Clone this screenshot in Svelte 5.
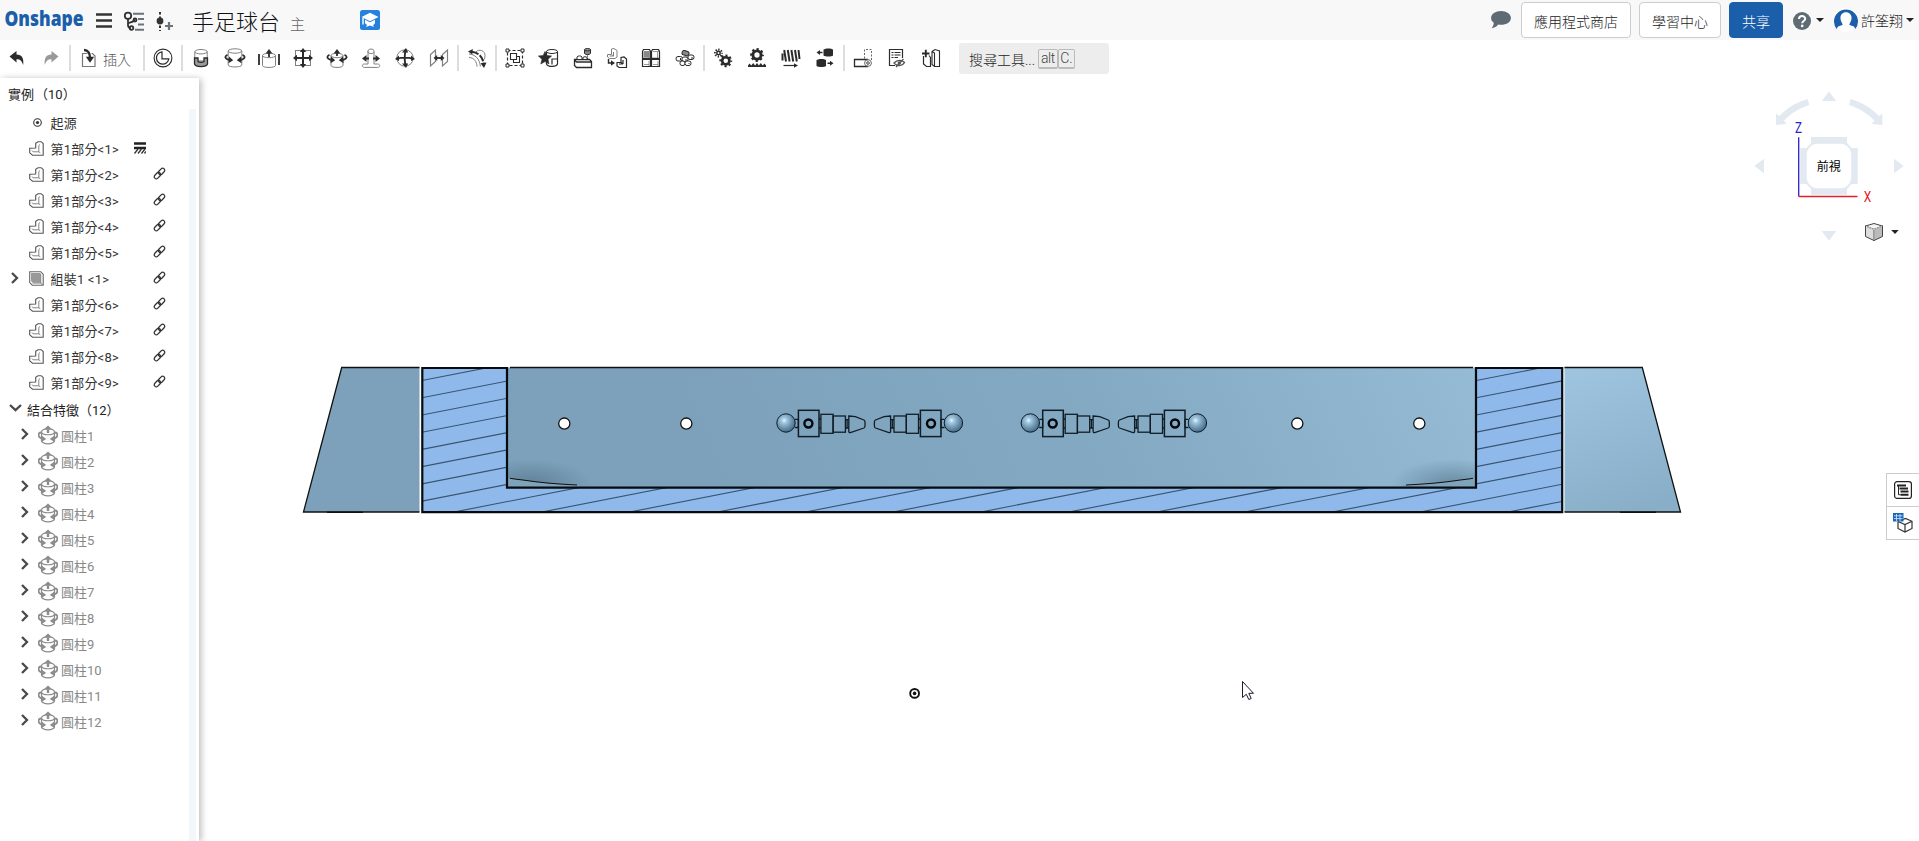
<script>
  const D = '#2b2b2b';
  const G = '#808080';

  function gear(x, y, r, teeth) {
    const step = (Math.PI * 2 * (r + 0.9)) / (teeth * 2);
    return `<circle cx="${x}" cy="${y}" r="${r - 0.8}" fill="none" stroke="${D}" stroke-width="${r * 0.6}"/>
      <circle cx="${x}" cy="${y}" r="${r + 0.9}" fill="none" stroke="${D}" stroke-width="2.2" stroke-dasharray="${step} ${step}" stroke-dashoffset="${step / 2}"/>`;
  }

  const cyl = (w, t, b) =>
    `<path d="M-${w} ${t}V${b}c0 2.6 ${2 * w} 2.6 ${2 * w} 0V${t}" fill="none" stroke="${G}"/><ellipse cx="0" cy="${t}" rx="${w}" ry="2.2" fill="none" stroke="${G}"/>`;
  const turn = `<path d="M-7.5-3.2C-11-1.5-10 1.2-5 2.2M7.5-3.2C11-1.5 10 1.2 5 2.2" fill="none" stroke="${D}" stroke-width="1.8"/>
    <path d="M-6-1.5-1.8 2.2-6.5 5.2zM6-1.5 1.8 2.2 6.5 5.2z" fill="${D}"/>`;

  const icons = {
    undo: `<path d="M-7.5-1.5-.5-7v3.4C5-3.6 7 0 6.2 7 4.6 2.4 3.2 1.2-.5 1.2V4.4z" fill="${D}"/>`,
    redo: `<path d="M7.5-1.5.5-7v3.4C-5-3.6-7 0-6.2 7-4.6 2.4-3.2 1.2.5 1.2V4.4z" fill="#999"/>`,
    insert: `<path d="M-1.5-4.5H-6.5V8.5H6V-2L3.5-4.5H2.5" fill="none" stroke="#777" stroke-width="1.2"/>
      <path d="M-5-8C-1-8 1-5 1 0" fill="none" stroke="${D}" stroke-width="2.4"/><path d="M-3.2-1.2H5.2L1 4.8z" fill="${D}"/>`,
    clock: `<circle r="8.9" fill="none" stroke="${D}" stroke-width="1.1"/><path d="M-1-6.2V0.8H5.8A6.2 6.2 0 1 1-1-6.2z" fill="none" stroke="${D}" stroke-width="1.2"/>`,
    fasten: `${cyl(6.2, -6.3, 1)}<path d="M-6.5 0v6c1 3.4 12 3.4 13 0V0H3v3.5c-1 1-5 1-6 0V0z" fill="#999" stroke="${D}" stroke-width="1.3"/>`,
    revolute: `${cyl(6.8, -7, 7)}${turn}`,
    slider: `${cyl(6.5, -2.5, 7.5)}<path d="M0-1V-6M-10-4V7M10-4V7" stroke="${D}" stroke-width="1.8"/><path d="M-3.4-4.5 0-9 3.4-4.5z" fill="${D}"/>`,
    planar: `<rect x="-7.5" y="-7.5" width="15" height="15" fill="none" stroke="${G}"/><path d="M-7 0H7M0-7V7" stroke="${D}" stroke-width="2"/>
      <path d="M0-10 3.200-6H-3.200zM0 10 3.200 6H-3.200zM-10 0-6-3.200V3.200zM10 0 6-3.200V3.200z" fill="${D}"/>`,
    cylindrical: `${cyl(6, -2.5, 7.5)}${turn}<path d="M0-2V-6" stroke="${D}" stroke-width="1.8"/><path d="M-3.4-4.5 0-9 3.4-4.5z" fill="${D}"/>`,
    pinslot: `<path d="M-3-7V6H-6.5c-3 0-3 3.4 0 3.4H6.5c3 0 3-3.4 0-3.4H3V-7c0-2.6-6-2.6-6 0v1c0 2 6 2 6 0" fill="none" stroke="${G}"/>
      <path d="M-6 .5H-2M2 .5H6" stroke="${D}" stroke-width="1.8"/><path d="M-9 .5-4.5-3V4zM9 .5 4.5-3V4z" fill="${D}"/>`,
    ball: `<circle r="8.2" fill="none" stroke="${G}"/><path d="M-8 1C-4-.8 4-.8 8 1M1-8C-.8-4-.8 4 1 8" fill="none" stroke="${D}" stroke-width="1.9"/>
      <path d="M1-10 3.200-5.500H-3zM1 10 3.200 5.500H-3zM-10 1-6-2.500V3zM10 1 6-2.500V3z" fill="${D}"/>`,
    parallel: `<path d="M-8.5-3.5-3.5-8V3.5L-8.5 8zM3.5-3.5 8.5-8V3.5L3.5 8z" fill="none" stroke="${G}" stroke-width="1.2"/>
      <path d="M-3 0H3" stroke="${D}" stroke-width="1.9"/><path d="M-5.5 0-1.8-3V3zM5.5 0 1.8-3V3z" fill="${D}"/>`,
    tangent: `<path d="M-8-.5C-3-.5 0 4 0 8.5M-8-4C-2.5-4 3 1 3.3 8.5M-1-6C2-9.500 8-7.500 8-2.500 8-.5 7.500 1 6.500 2" fill="none" stroke="${G}"/>
      <path d="M-5-6.200C1-5.500 6.200-1 6.500 5.500" fill="none" stroke="${D}" stroke-width="2" stroke-dasharray="7 1.500"/><path d="M-9-6.500-4.200-9-4.700-3.500zM7 10 3.500 5.300 9.500 4.500z" fill="${D}"/>`,
    group: `<path d="M-7.500-7.500H7.500V7.500H-7.500z" fill="none" stroke="${D}" stroke-width="1.200" stroke-dasharray="3 2"/>
      <path d="M-9-9h3v3h-3zM6-9h3v3H6zM-9 6h3v3h-3zM6 6h3v3H6z" fill="#fff" stroke="${D}"/><path d="M-1.500-1.500H4.500V4.500H-1.500z" fill="none" stroke="${D}" stroke-width="1.100"/><path d="M-4.500-4.500H1.500V1.500H-4.500z" fill="#fff" stroke="${D}" stroke-width="1.100"/>`,
    star: `<path d="M-2.500-6.500V6C-1 9.500 7.500 9 8.500 6V-6.500M3 6.500V1H8" fill="none" stroke="${D}" stroke-width="1.200"/><ellipse cx="3" cy="-6.500" rx="5.500" ry="2" fill="#fff" stroke="${D}"/>
      <path d="M-4-6.500-2.200-2.500 2.600-2-1 1.200 0 6-4 3.600-8.200 6-7 1.200-10.600-2-5.800-2.500z" fill="${D}" stroke="${D}" stroke-width=".6"/>`,
    stack: `<path d="M-8.500 1.500H6.500L8.500 3.500V9.500H-6.500L-8.500 7.500zM-8.500 2l2 2h15" fill="none" stroke="${D}" stroke-width="1.300"/><path d="M-6 1v-2c1-1.500 4-1.500 5 0v2M0 1v-1.500c1-1 3-1 4 0V1" fill="#fff" stroke="${D}"/>
      <path d="M1.500-8.500v4c1 1.500 5 1.500 6 0v-4" fill="#888" stroke="${D}"/><ellipse cx="4.500" cy="-8.300" rx="3" ry="1.200" fill="#999" stroke="${D}"/><path d="M4.500-2.500V1.500" stroke="${D}" stroke-dasharray="1.200 1"/>`,
    replicate: `<path d="M-9.500-3.500h4V-9L-3-9.500l3 2V-1l-2 1.500h-5.500l-2-1.500zM-5.500-3.500l2 1.500M-3.500-2h-4M-3.500-2V-6" fill="none" stroke="${G}"/>
      <path d="M0 4.500H4V-.5L7-1l2.500 2V9.500H2L0 8zM4 4.500l2 1.500M6 6H2M6 6V2" fill="none" stroke="${D}" stroke-width="1.200"/><path d="M-8.500 1v4h3" fill="none" stroke="${D}" stroke-width="1.400"/><path d="M-6 2.200-2 5-6 7.800z" fill="${D}"/>`,
    pattern: `<path d="M-8.500-6.500v6.800h8v-6.800l-1-2h-6zM.5-6.500V.3h8v-6.800l-1-2h-6zM-8.500 1.500v7h8v-7zM.5 1.500v7h8v-7z" fill="#fff" stroke="${D}" stroke-width="1.200"/><path d="M-7.500-6.500h6.200V-.5h-6.200z" fill="#888"/><path d="M-7-6.500h6M2-6.500h6M-7 6.500h5M2 6.500h5M-2-6V0M6.500-6V0M-2 3V8M7 3V8" stroke="${G}" stroke-width=".8"/>`,
    circular: `<g stroke="${D}" stroke-width="1"><rect x="-4.500" y="-7" width="7" height="4.500" rx="2" transform="rotate(18)" fill="#888"/><g fill="#fff"><rect x="-9" y="-1.500" width="6.500" height="4.500" rx="2"/><rect x="-3" y="-1" width="6" height="4.500" rx="2"/><rect x="3" y="-3" width="6" height="4.500" rx="2"/><rect x="-5" y="3" width="5" height="4.500" rx="2"/><rect x="0" y="3" width="6" height="4.500" rx="2"/></g><path d="M-4.500 0V2M1 1V3M7-1V1M4 5v1"/></g>`,
    gears: gear(-4.5, -5, 2.5, 8) + gear(2.8, 2.8, 4.4, 8),
    rack: gear(0, -3, 4.9, 8) + `<path d="M-9 9V7.500L-7.500 5.500-5.700 7.500-3.800 5-1.900 7.500 0 5 1.900 7.500 3.800 5 5.700 7.500 7.500 5.500 9 7.500V9z" fill="${D}"/>`,
    screw: `<path d="M-8.500-4.500v7M-6.800-8l1.800 11.500M-3.200-8l1.800 11.500M.4-8l1.800 11.500M4-8l1.800 11.500M7.500-8l1 9" stroke="${D}" stroke-width="2" fill="none"/><path d="M-7.500 7.500H4" stroke="${D}" stroke-width="1.200"/><path d="M3 5.200 7 7.500 3 9.800z" fill="${D}"/>`,
    linear: `<path d="M-1.500-8.500c2-1.500 8-1.500 9.500 0v6c-1.500 1.300-7.500 1.300-9.500 0zM-8.500 2c2-1.500 8-1.500 9.500 0v6c-1.500 1.300-7.500 1.300-9.500 0z" fill="${D}"/><path d="M-2.500-5.500H-6M2.500 5.200H6" stroke="${D}" stroke-width="1.400"/><path d="M-8.500-5.500-5-8V-3zM8.500 5.200 5 2.700V7.700z" fill="${D}"/>`,
    section: `<path d="M1.500.5V-8.500H8.500V2" fill="none" stroke="#666" stroke-dasharray="2 1.500"/><path d="M5 1.500H-8.500v7H5" fill="none" stroke="${D}" stroke-width="1.300"/><circle cx="5" cy="5" r="3.400" fill="none" stroke="#666"/><circle cx="5" cy="5" r="1.300" fill="none" stroke="#444"/>`,
    bom: `<path d="M-2 7.500H-7.500V-8.500H5.500V0" fill="none" stroke="${D}" stroke-width="1.200"/><path d="M-5.500-5.500h2M-2.500-5.500H3.500M-5.500-3h2M-2.500-3H3.500M-5.500-.5h2M-2.500-.5H1" stroke="${D}" stroke-width="1.200"/><path d="M-3 5C0 1.500 5 1.500 7.500 4.500 5 8.500 0 8.500-3 5zM-1 9 6.500 1" fill="none" stroke="#555" stroke-width="1.300"/><circle cx="2.300" cy="5" r="1.700" fill="#555"/>`,
    config: `<path d="M-7.500-2V6l3 2.500H-.5V-1M-2-2.500l1.500 2" fill="none" stroke="${D}" stroke-width="1.200"/><path d="M1-6.500 4-8.500 8.500-7V8.500H3.500L1 6.500zM1-6.500 3.500-5V8" fill="none" stroke="${D}" stroke-width="1.100"/><path d="M-9-4.500H-1.500M-5.200-8.300V-.8" stroke="${D}" stroke-width="1.900"/>`
  };

  const toolbar = [
    ['undo', 'redo'],
    ['insert'],
    ['clock'],
    ['fasten', 'revolute', 'slider', 'planar', 'cylindrical', 'pinslot', 'ball', 'parallel'],
    ['tangent'],
    ['group', 'star', 'stack', 'replicate', 'pattern', 'circular'],
    ['gears', 'rack', 'screw', 'linear'],
    ['section', 'bom', 'config']
  ];

  const parts = [1, 2, 3, 4, 5, 0, 6, 7, 8, 9];
  const mates = Array.from({ length: 12 }, (_, i) => i + 1);

  const slope = 0.19605;
  const hatch = Array.from({ length: 23 }, (_, k) => {
    const y = 380.3 + 17.22 * (k - 1);
    return { x1: 403.3, y1: y + 20 * slope, x2: 1583.3, y2: y - 1160 * slope };
  });
  const holes = [564.3, 686.3, 1297.3, 1419.3];
  const players = [
    { x: 808.4, dir: 1 },
    { x: 931, dir: -1 },
    { x: 1052.7, dir: 1 },
    { x: 1175, dir: -1 }
  ];
</script>

<div class="app">
  <header>
    <svg class="logo" width="84" height="40" viewBox="0 0 84 40">
      <text x="4.500" y="25.500" textLength="79" lengthAdjust="spacingAndGlyphs">Onshape</text>
    </svg>
    <svg class="nav" width="90" height="40" viewBox="90 0 90 40">
      <path d="M96 14.500h16M96 20.500h16M96 26.500h16" stroke="#333" stroke-width="2.600" />
      <g fill="none" stroke="#333" stroke-width="1.800">
        <circle cx="128" cy="15.800" r="3.200" /><path d="M128 19v6c0 2 1 3 3 3M128 24c0-2 6-1 6.500-4.500" /><circle cx="131.500" cy="28" r="1.800" /><circle cx="135" cy="20" r="1.500" />
      </g>
      <path d="M133 13.800h11M138 19h6M138 24.500h6M135 29.800h9" stroke="#68737b" stroke-width="2" />
      <path d="M160 12v19" stroke="#333" stroke-width="2" stroke-dasharray="2.500 2" /><circle cx="160" cy="21" r="3.400" fill="#333" />
      <path d="M165 26h8M169 22v8" stroke="#68737b" stroke-width="2.200" />
    </svg>
    <h1>手足球台</h1>
    <span class="tab">主</span>
    <svg class="badge" width="20" height="20" viewBox="0 0 20 20">
      <rect width="20" height="20" rx="2.500" fill="#2581dd" />
      <path d="M1.500 7 10 2.800 18.500 7 10 11.200zM5 9.800l5 2.400 5-2.400v3.500L13 15.500l1 1.500-4-1.500L6 17l1-2-2-1.700z" fill="#fff" /><path d="M3 8v6.500" stroke="#fff" stroke-width="1.400" />
    </svg>
    <div class="account">
      <svg class="chat" width="20" height="18" viewBox="0 0 20 18"><path d="M10 0c5.500 0 9.900 3 9.900 6.900s-4.400 6.900-9.900 6.900c-1 0-2-.1-2.800-.3C5.600 15.500 3.500 16.900.5 17.300 1.800 15.800 2.600 14 2.800 11.700 1.100 10.500.1 8.800.1 6.900.1 3 4.500 0 10 0z" fill="#5f6b74" /></svg>
      <button class="b1">應用程式商店</button>
      <button class="b2">學習中心</button>
      <button class="share">共享</button>
      <svg class="help" width="18" height="18" viewBox="0 0 18 18"><circle cx="9" cy="9" r="9" fill="#5f6b74" /><path d="M6 7c0-4 6.200-3.800 6.200-.3C12.200 9 9.200 8.900 9.200 11.200" fill="none" stroke="#fff" stroke-width="2" /><circle cx="9.200" cy="13.900" r="1.300" fill="#fff" /></svg>
      <i class="caret c1"></i>
      <svg class="avatar" width="24" height="24" viewBox="0 0 24 24"><circle cx="12" cy="12" r="12" fill="#fff" /><path d="M2.700 21A12 12 0 1 1 21.300 21L20 18.500 15.500 17C15 15.500 18 13 17.500 9 17 2.500 7 2.500 6.500 9 6 13 9 15.500 8.500 17L4 18.500z" fill="#1b5faa" /></svg>
      <span class="name">許筌翔</span>
      <i class="caret c2"></i>
    </div>
  </header>

  <nav class="tools">
    {#each toolbar as section, s}
      {#if s > 0}<span class="sep"></span>{/if}
      {#each section as key}
        <span class="tool" class:wide={key === 'insert'}>
          <svg width="22" height="22" viewBox="-11 -11 22 22">{@html icons[key]}</svg>
          {#if key === 'insert'}<em>插入</em>{/if}
        </span>
      {/each}
    {/each}
    <div class="search"><span>搜尋工具...</span><kbd class="alt">alt</kbd><kbd>C.</kbd></div>
  </nav>

  <main>
    <aside>
      <div class="list">
        <div class="title">實例<span>（10）</span></div>
        <div class="row">
          <svg class="origin" width="9" height="9" viewBox="0 0 9 9"><circle cx="4.500" cy="4.500" r="3.800" fill="none" stroke="#333" stroke-width="1.100" /><circle cx="4.500" cy="4.500" r="1.600" fill="#333" /></svg>
          <span class="label">起源</span>
        </div>
        {#each parts as n}
          <div class="row">
            {#if n === 0}
              <svg class="chev" width="8" height="12" viewBox="0 0 8 12"><path d="M1 1l5 5-5 5" /></svg>
              <svg class="part" width="15" height="15" viewBox="0 0 15 15"><path d="M.7.7h11l2.500 2.500v11h-11L.7 11.500z" fill="#fff" stroke="#666" stroke-width="1.100" /><path d="M2 2h9v9.500H3.500L2 10z" fill="#999" /><path d="M11.700 2.500v9.500H3.500M11.700 12l2 2" fill="none" stroke="#777" /></svg>
              <span class="label">組裝1 &lt;1&gt;</span>
            {:else}
              <svg class="part" width="15" height="15" viewBox="0 0 15 15"><path d="M.7 7.200 6.700 7V2.200L9 .7h3.200l2 1.800v11.700H3.500L.7 11.800z" fill="none" stroke="#555" stroke-width="1.100" /><path d="M3 9.500l1 1.300h5.800V4.500L11 3.500M9.800 10.800l1.500 1" fill="none" stroke="#777" stroke-width=".9" /></svg>
              <span class="label">第1部分&lt;{n}&gt;</span>
            {/if}
            {#if n === 1}
              <svg class="fixed" width="12" height="12" viewBox="0 0 12 12"><path d="M0 1.500h12M0 6h12" stroke="#222" stroke-width="2.600" /><path d="M.5 11.500 4 7M4 11.500 7.500 7M7.500 11.500 11 7M10.500 11.500 12 9.500" fill="none" stroke="#333" stroke-width="1.300" /></svg>
            {:else}
              <svg class="link" width="13" height="13" viewBox="0 0 13 13"><g fill="none" stroke="#333" stroke-width="1.300"><rect x="-3.600" y="-2.100" width="7.200" height="4.200" rx="2.100" transform="translate(8.600 4.400) rotate(-45)" /><rect x="-3.600" y="-2.100" width="7.200" height="4.200" rx="2.100" transform="translate(4.400 8.600) rotate(-45)" /></g></svg>
            {/if}
          </div>
        {/each}
        <div class="row heading">
          <svg class="down" width="13" height="8" viewBox="0 0 13 8"><path d="M1 1l5.500 5.200L12 1" /></svg>
          <span>結合特徵（12）</span>
        </div>
        {#each mates as n}
          <div class="row mate">
            <svg class="chev" width="8" height="12" viewBox="0 0 8 12"><path d="M1 1l5 5-5 5" /></svg>
            <svg class="mateicon" width="20" height="20" viewBox="-10 -10 20 20">
              <g fill="none" stroke="#8c8c8c" stroke-width="1.200"><path d="M-6.500-3.500V6C-5 9.700 5 9.700 6.500 6V-3.500M-6.500-3.500C-5-7 5-7 6.500-3.500M-6.500-2.500C-5 .5 5 .5 6.500-2.500" /><path d="M-7-2.500C-10.500-2.500-10.500 3-5 3.500M7-2.500C10.500-2.500 10.500 3 5 3.500" stroke-width="1.800" /></g>
              <path d="M0-9.500 3.800-6H1.200V-2H-1.200V-6H-3.800zM-6 .8-1.800 4-6.500 7zM6 .8 1.800 4 6.500 7z" fill="#8c8c8c" />
            </svg>
            <span>圓柱{n}</span>
          </div>
        {/each}
      </div>
      <div class="track"></div>
    </aside>

    <section class="stage">
      <svg width="1720" height="763" viewBox="199 78 1720 763">
        <defs>
          <linearGradient id="back" gradientUnits="userSpaceOnUse" x1="760" y1="560" x2="1440" y2="260"><stop offset="0" stop-color="#7da1bb" /><stop offset=".5" stop-color="#84aac3" /><stop offset="1" stop-color="#95bbd5" /></linearGradient>
          <linearGradient id="flap" x1=".3" y1="0" x2=".6" y2="1"><stop offset="0" stop-color="#9dc3de" /><stop offset="1" stop-color="#89aec8" /></linearGradient>
          <radialGradient id="sphere" cx=".4" cy=".36" r=".66"><stop offset="0" stop-color="#e8f4fb" /><stop offset=".22" stop-color="#a2c8e0" /><stop offset=".6" stop-color="#6f97b3" /><stop offset="1" stop-color="#436a85" /></radialGradient>
          <radialGradient id="shade"><stop offset="0" stop-color="#48677b" stop-opacity=".55" /><stop offset="1" stop-color="#48677b" stop-opacity="0" /></radialGradient>
          <clipPath id="profile"><path d="M422 368H507V488H1476V368H1562V512H422z" /></clipPath>
          <clipPath id="inside"><path d="M508 368H1475V487H508z" /></clipPath>
        </defs>

        <path d="M341.700 367.500H419.500V512H303.500z" fill="#7da1ba" />
        <path d="M419.500 367.500H341.700L303.500 512H419.500" fill="none" stroke="#111" stroke-width="1.300" />
        <path d="M327 512.300h36" stroke="#111" stroke-width="1.500" />
        <path d="M1564.500 367.500H1642.300L1680.500 512H1564.500z" fill="url(#flap)" />
        <path d="M1564.500 367.500H1642.300L1680.500 512H1564.500" fill="none" stroke="#111" stroke-width="1.300" />
        <path d="M1620 512.300h36" stroke="#111" stroke-width="1.500" />

        <rect x="508" y="367.500" width="967" height="120" fill="url(#back)" />
        <g clip-path="url(#inside)">
          <ellipse cx="530" cy="484" rx="62" ry="25" fill="url(#shade)" />
          <ellipse cx="1453" cy="484" rx="62" ry="25" fill="url(#shade)" />
          <path d="M508 478.300 548 483.500 580 485.500V488H508zM1475 478.300 1435 483.500 1403 485.500V488H1475z" fill="#7fa3b9" />
          <path d="M510 478.300C530 481 545 484 577 485M1473 478.300C1453 481 1438 484 1406 485" fill="none" stroke="#111" stroke-width="1.100" />
        </g>
        <path d="M510 367.500H1473" stroke="#111" stroke-width="1.400" />

        <path d="M422.300 368H507V487.700H1476V368H1562.200V512.200H422.300z" fill="#8eb9ea" />
        <g clip-path="url(#profile)" stroke="#38536f" stroke-width="1.100">
          {#each hatch as h}<line {...h} />{/each}
        </g>
        <path d="M422.300 368H507V487.700H1476V368H1562.200V512.200H422.300z" fill="none" stroke="#070b10" stroke-width="2.200" />

        {#each holes as x}<circle cx={x} cy="423.600" r="5.600" fill="#fff" stroke="#111" stroke-width="1.300" />{/each}

        {#each players as p}
          <g transform={`translate(${p.x} 423.500) scale(${p.dir} 1)`} fill="none" stroke="#111d26" stroke-width="1.300">
            <path d="M-13.500-4.200h3.500v8.200h-3.500M10.500-4.500h2M10.500 4.500h2M37-3.800h3.400M37 4.500h3.400M38.700-3.800v8.300" />
            <g transform={`scale(${p.dir} 1)`}><circle cx={-22.4 * p.dir} cy="-.5" r="9.200" fill="url(#sphere)" stroke-width="1" /></g>
            <rect x="-10" y="-13.200" width="20.600" height="26.300" stroke-width="1.500" />
            <rect x="12.500" y="-9.200" width="12.200" height="19" />
            <rect x="24.700" y="-7.500" width="12.300" height="16.200" />
            <path d="M40.400-7.500 47-6.800 55.500-3.500Q56.600-3 56.600-1.500V2.500Q56.600 4 55.500 4.500L42 9Q40.400 9.300 40.400 8z" />
            <circle r="4" stroke="#05080a" stroke-width="2.400" />
          </g>
        {/each}

        <circle cx="914.600" cy="693.400" r="4.400" fill="none" stroke="#111" stroke-width="1.900" /><circle cx="914.600" cy="693.400" r="1.800" fill="#111" />
        <path d="M1242.500 681.500V697.500L1246.300 694.300 1248.800 699.500 1251.200 698.500 1248.800 693.300H1253.500z" fill="#fff" stroke="#1c1c2c" stroke-width="1" />

        <g fill="#e2e9f0">
          <path d="M1829 91.500 1836.300 101H1821.700zM1829 240.700 1836.300 231H1821.700zM1754.300 166 1764 158.700V173.300zM1903.700 166 1894 158.700V173.300z" />
          <path d="M1807.500 99 1809.300 105C1800 108 1791.500 113 1784 120.500L1786.500 124 1776 125V113.500L1779.500 116C1787 108 1796 102.500 1807.500 99zM1850.800 99 1849 105C1858.300 108 1866.800 113 1874.300 120.500L1871.800 124 1882.300 125V113.500L1878.800 116C1871.300 108 1862.300 102.500 1850.800 99z" />
          <path d="M1811 137H1847V143L1851.500 148H1857.700V184H1851.500L1847 189V194.700H1811V189L1806.500 184H1800.300V148H1806.500L1811 143z" />
        </g>
        <rect x="1806.700" y="143.700" width="44.500" height="44.500" rx="11" fill="#fff" />
        <path d="M1798.700 137.300V196.500" stroke="#2b22cc" stroke-width="1.300" /><path d="M1798.700 196.500H1857.500" stroke="#e0202a" stroke-width="1.300" />
        <text class="axis z" x="1798.500" y="132.700" textLength="7" lengthAdjust="spacingAndGlyphs">Z</text>
        <text class="axis x" x="1867.500" y="201.700" textLength="7.500" lengthAdjust="spacingAndGlyphs">X</text>
        <text class="face" x="1828.700" y="171.300">前視</text>

        <g stroke="#444" stroke-width="1" stroke-linejoin="round"><path d="M1865.500 226 1874 223.500 1882.500 226 1874 229.500z" fill="#f4f4f4" /><path d="M1865.500 226 1874 229.500V240.500L1865.500 236.500z" fill="#ddd" /><path d="M1882.500 226 1874 229.500V240.500L1882.500 236.500z" fill="#bbb" /><path d="M1866 226.300 1874 229.600 1882 226.300M1874 229.500V240" stroke="#ccc" fill="none" /></g>
        <path d="M1891.200 230h7.500l-3.700 4z" fill="#222" />
      </svg>

      <div class="panels">
        <div><svg width="18" height="18" viewBox="0 0 18 18"><rect x=".6" y=".6" width="16.800" height="16.800" rx="2.500" fill="#fff" stroke="#222" stroke-width="1.200" /><path d="M3 4.500h9M5.500 7.500H14M6.500 10.500h8M6.500 13.700h8" stroke="#222" stroke-width="1.900" /><path d="M4.500 4v9.700h2" fill="none" stroke="#222" /></svg></div>
        <div><svg width="20" height="20" viewBox="0 0 20 20"><path d="M10 6.500 12.500 5.500 19 8.300V15.500L12 19 5 15.500V9M5 8.500 12 11.500 19 8.300M12 11.500V19" fill="none" stroke="#333" stroke-width="1.200" /><rect x="0" y="0" width="10.500" height="8.500" fill="#1c66b6" /><path d="M1 2.800h8.500M1 5.600h8.500M3.500 1v7M7 1v7" stroke="#d9eaff" stroke-width=".8" /></svg></div>
      </div>
    </section>
  </main>
</div>

<style>
  :global(body) { margin: 0; overflow: hidden; }
  .app { width: 1919px; height: 841px; display: flex; flex-direction: column; overflow: hidden; background: #fff; color: #222; font: 300 14px Roboto, "Noto Sans CJK TC", sans-serif; }
  svg { display: block; flex: none; }
  header { height: 40px; flex: none; display: flex; align-items: center; background: #f8f8f8; }
  .logo { overflow: visible; }
  .logo text { font: 800 20.5px "Open Sans", sans-serif; fill: #1b5faa; }
  .nav { margin-left: 6px; }
  h1 { margin: 5px 0 0 12px; font-size: 22px; line-height: 34px; font-weight: 300; width: 88px; white-space: nowrap; color: #111; }
  .tab { margin: 7px 0 0 10px; width: 15px; font-size: 15px; color: #666; }
  .badge { margin-left: 55px; }
  .account { margin-left: auto; display: flex; align-items: center; height: 40px; }
  .chat { margin-right: 10px; }
  button { height: 36px; box-sizing: border-box; padding: 1px 0 0; border: 1px solid #ccc; border-radius: 4px; background: #fff; color: #222; font: inherit; }
  .b1 { width: 110px; margin-right: 8px; }
  .b2 { width: 82px; margin-right: 8px; }
  .share { width: 54px; background: #1b5faa; border-color: #1b5faa; color: #fff; margin-right: 10px; }
  .caret { border: 4px solid transparent; border-top-color: #222; border-bottom: 0; }
  .c1 { margin: 0 10px 0 5px; }
  .name { margin: 0 3px; white-space: nowrap; }
  .c2 { margin-right: 5px; }
  .help { margin-top: 2px; }

  .tools { height: 38px; flex: none; display: flex; align-items: center; padding-bottom: 2px; box-sizing: border-box; }
  .tool { width: 34px; height: 34px; display: flex; align-items: center; justify-content: center; }
  .wide { width: 64px; padding-left: 6px; justify-content: flex-start; }
  .wide em { font-style: normal; margin: 1px 0 0 3px; color: #555; }
  .sep { width: 2px; height: 26px; margin: 0 1px; background: #ddd; }
  .search { margin-left: 11px; width: 150px; height: 31px; margin-top: 1px; box-sizing: border-box; padding-left: 10px; display: flex; align-items: center; background: #ededed; border-radius: 3px; color: #222; }
  .search span { width: 69px; white-space: nowrap; }
  kbd { box-sizing: border-box; width: 17px; height: 20px; border: 1px solid #bbb; border-bottom-width: 2px; border-radius: 2px; font: 300 14px/16px Roboto, sans-serif; color: #444; text-align: center; }
  .alt { width: 20px; letter-spacing: -.4px; }

  main { flex: 1; display: flex; min-height: 0; }
  aside { width: 199px; flex: none; display: flex; background: #fff; box-shadow: 2px 1px 7px rgba(0, 0, 0, .28); z-index: 1; font-size: 13px; }
  .list { width: 189px; }
  .track { width: 7px; margin-top: 31px; background: #f2f7fb; }
  .title { height: 31px; padding: 1px 0 0 8px; box-sizing: border-box; line-height: 32px; font-weight: 400; }
  .title span { margin-left: 1px; }
  .row { height: 26px; display: flex; align-items: center; padding-left: 28.500px; white-space: nowrap; }
  .origin { margin: 0 8.500px 0 4.500px; }
  .part { margin-right: 7px; }
  .label { padding-top: 1px; width: 81px; font-weight: 400; letter-spacing: .2px; color: #333; }
  .row .chev { margin-left: -18px; margin-right: 10px; }
  .chev path, .down path { fill: none; stroke: #4a4a4a; stroke-width: 2.300; }
  .link { margin: 0 0 1px 21.500px; }
  .fixed { margin: 0 0 1px 2px; }
  .heading { padding-left: 9px; padding-top: 1px; font-weight: 400; }
  .down { margin: 0 5px 2px 0; }
  .mate { padding-left: 21px; color: #888; }
  .row.mate .chev { margin: 0 9px 2px 0; }
  .mateicon { margin-right: 3px; }
  .mate span { padding-top: 0; font-size: 13px; font-weight: 400; }

  .stage { position: relative; flex: 1; }
  .axis { font: 400 14px Roboto, sans-serif; text-anchor: middle; }
  .z { fill: #2b22cc; }
  .x { fill: #e0202a; }
  .face { font: 400 12px "Noto Sans CJK TC", sans-serif; text-anchor: middle; fill: #000; }
  .panels { position: absolute; right: 0; top: 395px; width: 33px; box-sizing: border-box; border: 1px solid #ccc; border-right: 0; background: #fff; }
  .panels div { height: 32px; padding-left: 7px; display: flex; align-items: center; }
  .panels div + div { border-top: 1px solid #ccc; padding-left: 6px; }
</style>
